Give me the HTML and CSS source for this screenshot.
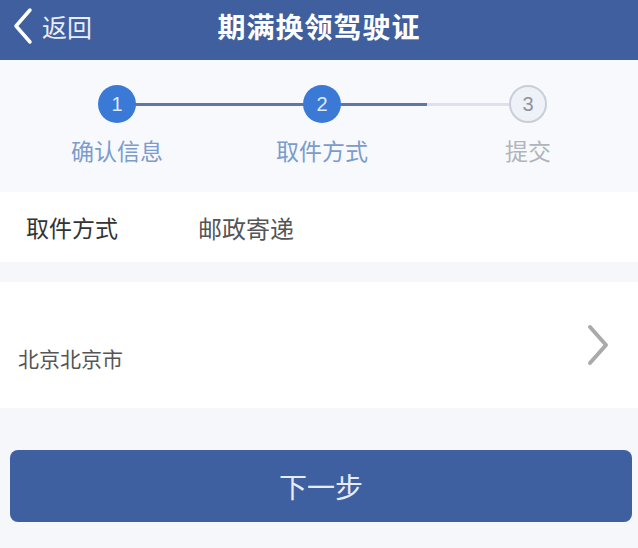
FILE: index.html
```html
<!DOCTYPE html>
<html lang="zh-CN">
<head>
  <meta charset="UTF-8">
  <title>期满换领驾驶证</title>
  <link rel="stylesheet" href="styles.css">
</head>
<body>
  <div class="header">
    <div class="back">
      <svg width="22" height="38" viewBox="0 0 22 38"><path d="M18 3 L4 19 L18 35" fill="none" stroke="#fff" stroke-width="3.5" stroke-linecap="round" stroke-linejoin="round"/></svg>
      <span>返回</span>
    </div>
    <h1>期满换领驾驶证</h1>
  </div>

  <div class="steps">
    <div class="track">
      <div class="line line-done"></div>
    </div>
    <div class="step done">
      <div class="dot">1</div>
      <div class="label">确认信息</div>
    </div>
    <div class="step done">
      <div class="dot">2</div>
      <div class="label">取件方式</div>
    </div>
    <div class="step">
      <div class="dot">3</div>
      <div class="label">提交</div>
    </div>
  </div>

  <div class="row">
    <span class="key">取件方式</span>
    <span class="value">邮政寄递</span>
  </div>

  <div class="row address">
    <span class="value">北京北京市</span>
    <svg width="26" height="44" viewBox="0 0 26 44"><path d="M5 4 L21 22 L5 40" fill="none" stroke="#aaa" stroke-width="4" stroke-linecap="round" stroke-linejoin="round"/></svg>
  </div>

  <div class="actions">
    <button class="next">下一步</button>
  </div>
</body>
</html>
```

FILE: styles.css
```css
body {
  margin: 0;
  font-family: "Noto Sans CJK SC", "Noto Sans", sans-serif;
  background-color: #f5f7fa;
  color: #333;
}

.header {
  position: relative;
  height: 60px;
  box-sizing: border-box;
  padding-bottom: 8px;
  background-color: #3f5f9e;
  color: #fff;
  display: flex;
  align-items: center;
  justify-content: center;
}

.header h1 {
  margin: 0;
  font-size: 28px;
  font-weight: bold;
  letter-spacing: 1px;
}

.back {
  position: absolute;
  left: 12px;
  top: 7px;
  display: flex;
  align-items: center;
  gap: 8px;
  font-size: 25px;
  color: #e8eef8;
}

.steps {
  position: relative;
  height: 132px;
  background-color: #f7f9fc;
  display: flex;
}

.track {
  position: absolute;
  left: 117px;
  top: 43px;
  width: 411px;
  height: 3px;
  background-color: #dde2ea;
}

.line {
  position: absolute;
  top: 0;
  height: 3px;
  background-color: #5b78a8;
}

.line-done {
  left: 0;
  width: 310px;
}

.step {
  position: relative;
  display: flex;
  flex-direction: column;
  align-items: center;
  width: 120px;
}

.steps .step:nth-child(2) {
  margin-left: 57px;
}

.steps .step:nth-child(3) {
  margin-left: 85px;
}

.steps .step:nth-child(4) {
  margin-left: 86px;
}

.dot {
  margin-top: 25px;
  width: 38px;
  height: 38px;
  border-radius: 50%;
  box-sizing: border-box;
  border: 2px solid #c9ced8;
  background-color: #eef2f8;
  color: #8c929c;
  font-family: "Liberation Sans", sans-serif;
  font-size: 20px;
  display: flex;
  align-items: center;
  justify-content: center;
}

.done .dot {
  border: none;
  background-color: #3b79d6;
  color: #dfe9fa;
}

.label {
  margin-top: 10px;
  font-size: 23px;
  color: #b0b4bb;
  white-space: nowrap;
}

.done .label {
  color: #7b9ccc;
}

.row {
  height: 70px;
  background-color: #fff;
  display: flex;
  align-items: center;
  padding: 0 26px;
  font-size: 23px;
}

.key {
  width: 172px;
  color: #333;
}

.value {
  color: #555;
  font-size: 24px;
}

.address {
  margin-top: 20px;
  height: 126px;
  padding: 0 27px 0 18px;
  justify-content: space-between;
}

.address .value {
  margin-top: 26px;
  font-size: 21px;
}

.actions {
  padding: 42px 6px 26px 10px;
}

.next {
  width: 100%;
  height: 72px;
  border: none;
  border-radius: 8px;
  background-color: #3f60a0;
  color: #e6ecf6;
  font-family: "Noto Sans CJK SC", sans-serif;
  font-size: 28px;
}
```
